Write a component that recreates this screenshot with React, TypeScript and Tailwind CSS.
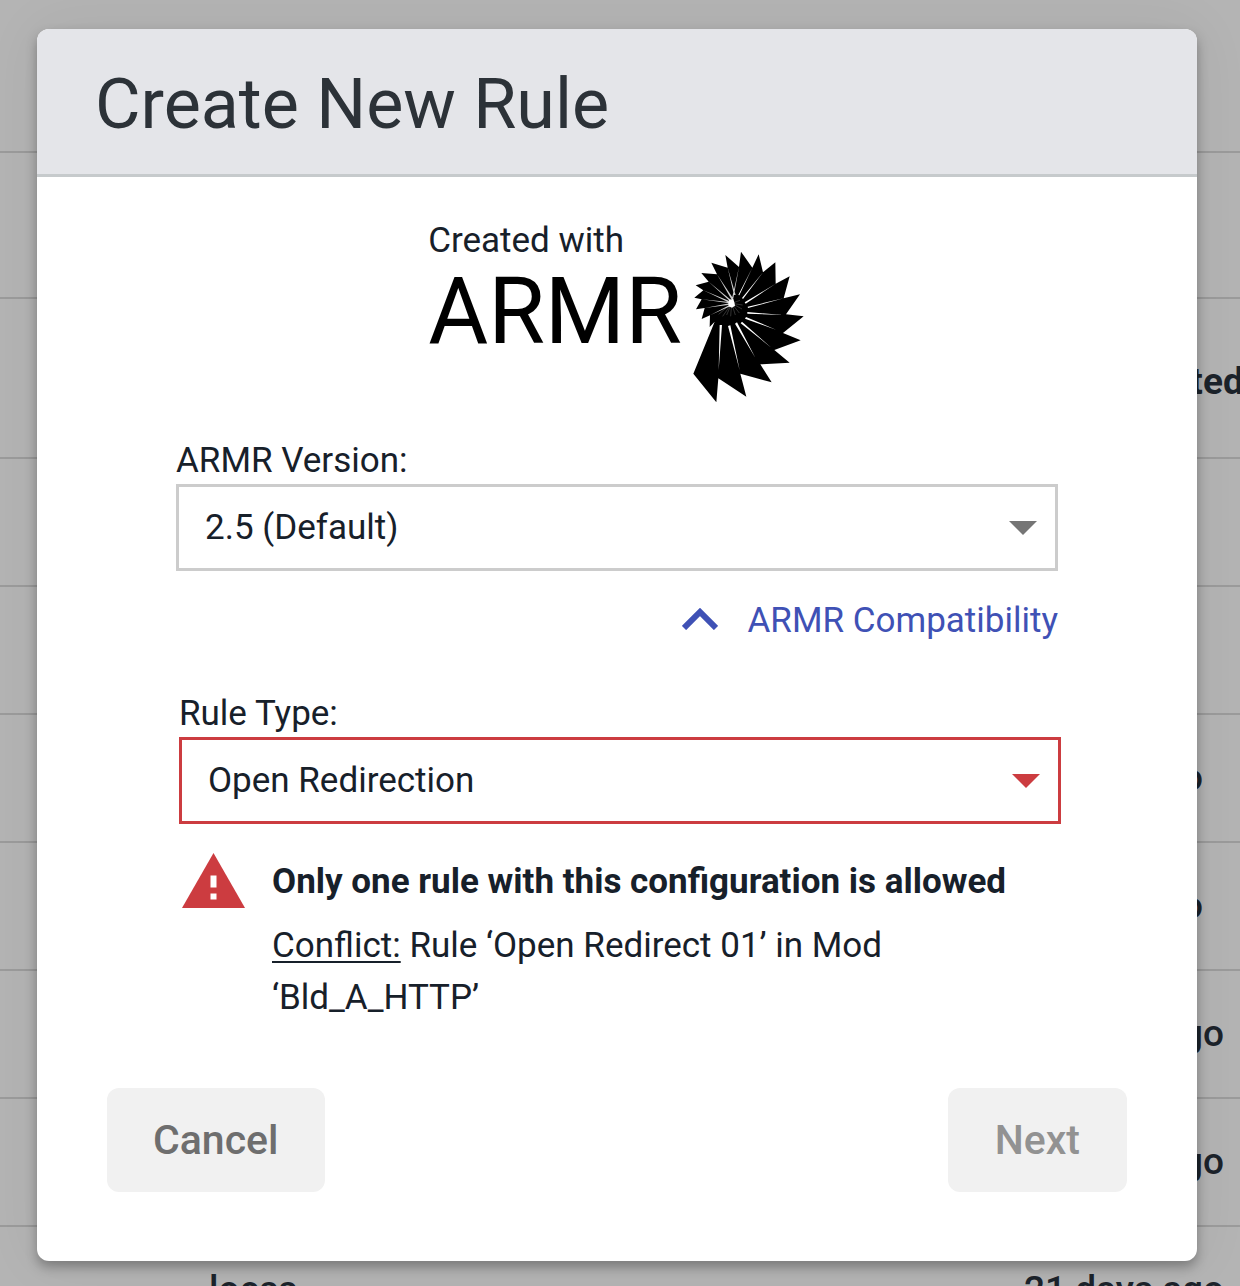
import React, {useState} from 'react';

interface SelectProps {
  id: string
  label: string
  options: string[]
  invalid?: boolean
}

interface Row {
  name: string
  updated: string
}

const rows: Row[] = [
  {name: '', updated: ''},
  {name: '', updated: ''},
  {name: '', updated: '9 days ago'},
  {name: '', updated: '9 days ago'},
  {name: '', updated: '21 days ago'},
  {name: '', updated: '21 days ago'},
  {name: 'loess', updated: '21 days ago'},
]

const SelectField = (props: SelectProps) => {
  return (
    <div className="flex flex-col">
      <label htmlFor={props.id} className="pt-px text-[35px] leading-[47px]">{props.label}</label>
      <div className="relative">
        <select
          id={props.id}
          aria-invalid={props.invalid}
          className={`w-full h-[87px] appearance-none bg-white border-[3px] px-[26px] pt-px text-[35px] outline-none ${props.invalid ? 'border-[#cc3c40]' : 'border-[#cccccc]'}`}>
          {props.options.map((option) => <option key={option}>{option}</option>)}
        </select>
        <svg
          viewBox="0 0 28 14"
          className={`absolute right-[21px] top-9 w-7 h-4 pointer-events-none ${props.invalid ? 'fill-[#cc3c40]' : 'fill-[#757575]'}`}>
          <path d="M0 0h28L14 14z"/>
        </svg>
      </div>
    </div>
  );
};

const ArmrLogo = () => {
  return (
    <div className="flex justify-center">
      <div className="flex flex-col">
        <span className="text-[35px] leading-[48px]">Created with</span>
        <span className="text-[92px] leading-[94px] text-black">ARMR</span>
      </div>
      <svg viewBox="0 0 390 495" className="w-[130px] h-[165px] mt-[28px] ml-[2px] -mr-2" aria-hidden="true">
        <path d="M92 230L28 386L97 472L103 400L187 455L169 386L263 412L229 358L317 353L271 315L350 286L297 264L359 214L306 208L348 148L299 160L317 94L275 116L274 52L237 82L224 28L205 68L171 20L165 66L124 30L131 68L82 53L99 88L52 84L74 110L35 121L58 136L31 158L53 163L36 193L62 189L53 222L78 211L77 246z"/>
        {/* gaps between the long blades */}
        <path fill="#fff" d="M107 240h7L104 376zM132 243l7-2L167 376zM153 236l6-4L214 338zM170 235l4-5L262 308zM183 221l3-5L276 254zM190 206v-5L298 210zM192 189l-1-4L299 160zM185 176l-3-4L275 116zM177 162l-3-3L237 82zM166 151l-3-1L205 68z"/>
        {/* gaps between the short blades */}
        <path fill="#fff" d="M147 165h-4L165 66zM155 150h-5L131 68zM147 160l-5 3L99 88zM141 165l-3 4L74 110zM138 169l-2 4L58 136zM136 171v4L53 163zM137 175l1 4L62 189zM138 179l2 4L78 211z" opacity="0.8"/>
        <path stroke="#fff" strokeWidth="1" opacity="0.6" d="M143 175L104 208M143 175L116 214M143 175L128 210M143 175L140 214M143 175L154 210M143 175L166 204M143 175L174 192M143 175L176 180M143 175L168 166"/>
        <path fill="#fff" d="M136 164l12-2 3 10 2 10-9 6-10-4-1-10z"/>
      </svg>
    </div>
  );
};

const RulesTable = () => {
  return (
    <table className="w-full table-fixed border-collapse text-left text-[37px] leading-[40px] text-[#1c232b]">
      <colgroup>
        <col/>
        <col className="w-[216px]"/>
      </colgroup>
      <thead>
        <tr className="h-[152px] border-b-2 border-[#9b9b9b]"><td colSpan={2}/></tr>
        <tr className="h-[146px] border-b-2 border-[#9b9b9b]"><td colSpan={2}/></tr>
        <tr className="h-40 border-b-2 border-[#9b9b9b]">
          <th/>
          <th className="font-bold whitespace-nowrap pt-2">Last Updated</th>
        </tr>
      </thead>
      <tbody>
        {rows.map((row, i) => (
          <tr key={i} className="h-32 border-b-2 border-[#9b9b9b]">
            <td className="pl-[209px] font-medium">{row.name}</td>
            <td className="font-medium whitespace-nowrap">{row.updated}</td>
          </tr>
        ))}
      </tbody>
    </table>
  );
};

const App = () => {
  const [open, setOpen] = useState(true)

  return (
    <div className="relative h-screen overflow-hidden bg-[#b4b4b4] font-['Roboto',sans-serif]">
      <RulesTable/>
      {open && (
        <div className="absolute inset-0 pl-[37px] pr-[43px] pt-[29px] pb-[25px]">
          <div role="dialog" aria-labelledby="title" className="h-full flex flex-col rounded-xl overflow-hidden bg-white text-[#17202a] shadow-[0_6px_12px_rgba(0,0,0,0.3),0_0_60px_rgba(0,0,0,0.06)]">
            <header className="bg-[#e4e5e9] h-[148px] px-[58px] pt-1 flex items-center border-b-[3px] border-[#c6cacc]">
              <h1 id="title" className="text-[70px] leading-[80px] text-[#2c3238]">Create New Rule</h1>
            </header>
            <form className="flex-1 flex flex-col px-[70px] pt-10 pb-[69px]" onSubmit={(e) => e.preventDefault()}>
              <ArmrLogo/>
              <div className="flex flex-col px-[69px] mt-[26px]">
                <SelectField id="version" label="ARMR Version:" options={['2.5 (Default)']}/>
                <button type="button" className="self-end flex items-center gap-[30px] mt-[25px] text-[35px] leading-[50px] text-[#3f51b5]">
                  <svg viewBox="0 0 36 22" className="w-9 h-[22px] mb-1">
                    <path d="M2 20L18 4L34 20" fill="none" stroke="currentColor" strokeWidth="6"/>
                  </svg>
                  ARMR Compatibility
                </button>
                <div className="mt-[43px] ml-[3px] -mr-[3px]">
                  <SelectField id="type" label="Rule Type:" options={['Open Redirection']} invalid/>
                </div>
                <div role="alert" className="flex mt-[29px] text-[35px] leading-[52px]">
                  <svg viewBox="0 0 63 55" className="ml-[6px] mr-[27px] w-[63px] h-[55px] shrink-0">
                    <path d="M31.500 0L63 55H0z" fill="#cc3c40"/>
                    <path d="M28.500 22.500h6v12h-6zM28.500 40.500h6v6h-6z" fill="#fff"/>
                  </svg>
                  <div className="pt-[3px]">
                    <p className="font-bold">Only one rule with this configuration is allowed</p>
                    <p className="mt-3"><span className="underline underline-offset-4 decoration-2">Conflict:</span> Rule ‘Open Redirect 01’ in Mod ‘Bld_A_HTTP’</p>
                  </div>
                </div>
              </div>
              <div className="flex justify-between mt-auto text-[41px] font-medium">
                <button type="button" onClick={() => setOpen(false)} className="h-[104px] px-[46px] pt-[2px] rounded-xl bg-[#f1f1f1] text-[#6e6e6e]">Cancel</button>
                <button type="submit" disabled className="h-[104px] px-[47px] pt-[2px] rounded-xl bg-[#f1f1f1] text-[#929292]">Next</button>
              </div>
            </form>
          </div>
        </div>
      )}
    </div>
  );
};

export default App;
